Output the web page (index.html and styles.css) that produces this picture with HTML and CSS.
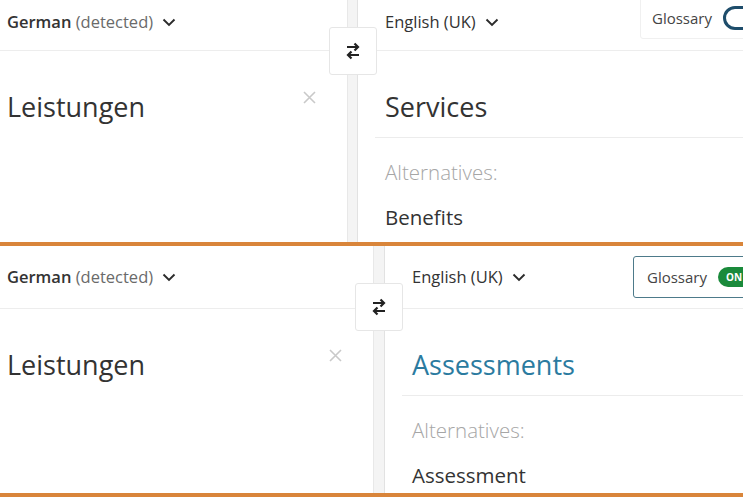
FILE: index.html
```html
<!DOCTYPE html>
<html lang="en">
<head>
<meta charset="utf-8">
<title>Translator glossary comparison</title>
<link rel="stylesheet" href="styles.css">
</head>
<body>
<div class="panel panel-a">
  <section class="src">
    <header class="head">
      <span class="lang"><b>German</b> <span class="muted">(detected)</span></span>
      <svg class="chev" width="14" height="9" viewBox="0 0 14 9"><path d="M1.5 1.5l5.5 5.5 5.5-5.5" fill="none" stroke="#2b2b2b" stroke-width="1.9"/></svg>
    </header>
    <div class="body">
      <p class="input">Leistungen</p>
      <svg class="clear" width="13" height="13" viewBox="0 0 13 13"><path d="M1 1l11 11M12 1L1 12" stroke="#c9c9c9" stroke-width="1.6"/></svg>
    </div>
  </section>
  <div class="divider">
    <button class="swap" aria-label="Swap languages">
      <svg width="16" height="20" viewBox="0 0 16 20"><path d="M2 6h11M9.5 2.5l3.5 3.5-3.5 3.5M14 14H3M6.5 10.5L3 14l3.5 3.5" fill="none" stroke="#222" stroke-width="2.2"/></svg>
    </button>
  </div>
  <section class="tgt">
    <header class="head">
      <span class="lang lang-t">English (UK)</span>
      <svg class="chev" width="14" height="9" viewBox="0 0 14 9"><path d="M1.5 1.5l5.5 5.5 5.5-5.5" fill="none" stroke="#2b2b2b" stroke-width="1.9"/></svg>
      <div class="glossary">
        <span>Glossary</span>
        <span class="toggle off"></span>
      </div>
    </header>
    <div class="body tbody">
      <p class="result">Services</p>
      <p class="alts-label">Alternatives:</p>
      <p class="alt">Benefits</p>
    </div>
  </section>
</div>
<div class="panel panel-b">
  <section class="src">
    <header class="head">
      <span class="lang"><b>German</b> <span class="muted">(detected)</span></span>
      <svg class="chev" width="14" height="9" viewBox="0 0 14 9"><path d="M1.5 1.5l5.5 5.5 5.5-5.5" fill="none" stroke="#2b2b2b" stroke-width="1.9"/></svg>
    </header>
    <div class="body">
      <p class="input">Leistungen</p>
      <svg class="clear" width="13" height="13" viewBox="0 0 13 13"><path d="M1 1l11 11M12 1L1 12" stroke="#c9c9c9" stroke-width="1.6"/></svg>
    </div>
  </section>
  <div class="divider">
    <button class="swap" aria-label="Swap languages">
      <svg width="16" height="20" viewBox="0 0 16 20"><path d="M2 6h11M9.5 2.5l3.5 3.5-3.5 3.5M14 14H3M6.5 10.5L3 14l3.5 3.5" fill="none" stroke="#222" stroke-width="2.2"/></svg>
    </button>
  </div>
  <section class="tgt">
    <header class="head">
      <span class="lang lang-t">English (UK)</span>
      <svg class="chev" width="14" height="9" viewBox="0 0 14 9"><path d="M1.5 1.5l5.5 5.5 5.5-5.5" fill="none" stroke="#2b2b2b" stroke-width="1.9"/></svg>
      <div class="glossary on">
        <span>Glossary</span>
        <span class="toggle">ON</span>
      </div>
    </header>
    <div class="body tbody">
      <p class="result result-g">Assessments</p>
      <p class="alts-label">Alternatives:</p>
      <p class="alt">Assessment</p>
    </div>
  </section>
</div>
</body>
</html>
```
FILE: styles.css
```css
* { box-sizing: border-box; }
html, body {
  margin: 0;
  padding: 0;
  background: #fff;
}
body {
  width: 743px;
  height: 497px;
  overflow: hidden;
  font-family: "Open Sans", "Noto Sans", sans-serif;
  color: #333;
}
p { margin: 0; }

.panel {
  display: flex;
  overflow: hidden;
  border-bottom: 4px solid #d9853a;
}
.panel-a { height: 246px; }
.panel-b { height: 251px; }

.src {
  display: flex;
  flex-direction: column;
}
.panel-a .src { width: 347px; }
.panel-b .src { width: 373px; }

.tgt {
  flex: 1;
  display: flex;
  flex-direction: column;
  min-width: 0;
}

.head {
  display: flex;
  align-items: flex-start;
  border-bottom: 1px solid #ededed;
  flex-shrink: 0;
}
.panel-a .head { height: 51px; }
.panel-b .head { height: 63px; }

.src .head { padding-left: 7px; }
.tgt .head { padding-left: 27px; }

.lang {
  font-size: 16.5px;
  line-height: 22px;
  color: #333;
  white-space: nowrap;
}
.panel-a .lang { margin-top: 11px; }
.panel-b .lang { margin-top: 20px; }
.lang b { font-weight: 600; }
.lang .muted { color: #6a6a6a; }
.lang-t { font-weight: 500; }

.chev { margin-left: 9px; }
.panel-a .chev { margin-top: 18px; }
.panel-b .chev { margin-top: 27px; }

.glossary {
  margin-left: auto;
  margin-right: -60px;
  display: flex;
  align-items: center;
  gap: 11px;
  height: 42px;
  border-radius: 3px;
  font-size: 15px;
  font-weight: 500;
  color: #444;
  white-space: nowrap;
}
.panel-a .glossary {
  width: 163px;
  margin-top: -3px;
  padding-left: 11px;
  border: 1px solid #f0f0f0;
}
.panel-b .glossary {
  width: 170px;
  margin-top: 10px;
  padding-left: 13px;
  border: 1px solid #4d7a8a;
}
.toggle {
  display: inline-flex;
  align-items: center;
  width: 44px;
  height: 24px;
  border-radius: 12px;
}
.toggle.off {
  border: 3.5px solid #1e4d6b;
}
.glossary.on .toggle {
  background: #1a8a3b;
  color: #fff;
  font-size: 10px;
  font-weight: 700;
  padding-left: 8px;
  height: 20px;
  border-radius: 10px;
}

.body {
  flex: 1;
  display: flex;
  align-items: flex-start;
}
.input {
  flex: 1;
  padding-left: 7px;
  margin-top: 38px;
  font-size: 27px;
  line-height: 36px;
  color: #333;
}
.clear {
  margin-top: 40px;
  margin-right: 31px;
}

.divider {
  position: relative;
  flex-shrink: 0;
  background: #f4f4f4;
  border-left: 1px solid #e8e8e8;
  border-right: 1px solid #e2e2e2;
}
.panel-a .divider { width: 11px; }
.panel-b .divider { width: 12px; }

.swap {
  position: absolute;
  left: 50%;
  margin-left: -24px;
  width: 48px;
  height: 48px;
  background: #fff;
  border: 1px solid #e6e6e6;
  border-radius: 3px;
  display: flex;
  align-items: center;
  justify-content: center;
  padding: 0;
}
.panel-a .swap { top: 27px; }
.panel-b .swap { top: 37px; }

.tbody {
  flex-direction: column;
  align-items: stretch;
  padding-left: 17px;
}
.result {
  margin-top: 38px;
  padding: 0 0 12px 10px;
  border-bottom: 1px solid #ececec;
  font-size: 27px;
  line-height: 36px;
  color: #333;
}
.result-g { color: #2b7ba0; }
.alts-label {
  margin-top: 21px;
  padding-left: 10px;
  font-size: 20.5px;
  font-weight: 300;
  line-height: 26px;
  color: #a6a6a6;
}
.alt {
  margin-top: 19px;
  padding-left: 10px;
  font-size: 20.5px;
  line-height: 26px;
  color: #333;
}
```
